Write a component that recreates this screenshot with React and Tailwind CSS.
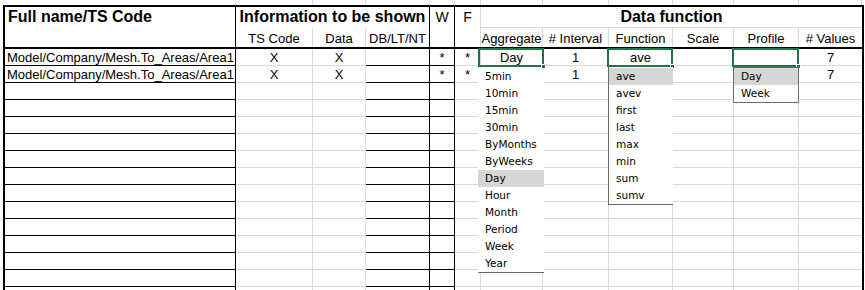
import React from "react";

// sheet column layout (A..L), widths include the 1px right border
const cols = [
  { border: "border-r border-black" },
  { border: "border-r border-[#dadada]" },
  { border: "border-r border-[#dadada]" },
  { border: "border-r border-black" },
  { border: "border-r border-black" },
  { border: "border-r border-[#dadada]" },
  { border: "border-r border-[#dadada]" },
  { border: "border-r border-[#dadada]" },
  { border: "border-r border-[#dadada]" },
  { border: "border-r border-[#dadada]" },
  { border: "border-r border-[#dadada]" },
  { border: "" },
];

const rows = [
  ["Model/Company/Mesh.To_Areas/Area1", "X", "X", "", "*", "*", "Day", "1", "ave", "", "", "7"],
  ["Model/Company/Mesh.To_Areas/Area1", "X", "X", "", "*", "*", "", "1", "", "", "", "7"],
  ...Array.from({ length: 13 }, () => Array(12).fill("")),
];

const aggregateOptions = ["5min", "10min", "15min", "30min", "ByMonths", "ByWeeks", "Day", "Hour", "Month", "Period", "Week", "Year"];
const functionOptions = ["ave", "avev", "first", "last", "max", "min", "sum", "sumv"];
const profileOptions = ["Day", "Week"];

const Option = ({ label, active }) => (
  <div
    className={`h-[17px] leading-[17px] pl-[7px] text-[10.5px] font-['DejaVu_Sans',sans-serif] text-black whitespace-nowrap ${
      active ? "bg-[#d6d6d6]" : ""
    }`}
  >
    {label}
  </div>
);

const Selected = ({ className }) => (
  <div className={`absolute h-[19px] border-2 border-[#217346] pointer-events-none ${className}`}>
    <div className="absolute -right-[4px] -bottom-[4px] w-[5px] h-[5px] bg-[#217346] border border-white" />
  </div>
);

export default function App() {
  return (
    <div className="relative w-[865px] h-[290px] overflow-hidden bg-white text-black font-['Liberation_Sans',Arial,sans-serif]">
      {/* strip of the row above the table */}
      <div className="ml-[5px] h-[5px] grid grid-cols-[231px_77px_53px_64px_25px_26px_62px_66px_64px_61px_65px_63px]">
        {cols.map((c, i) => (
          <div key={i} className="border-r border-[#dadada]" />
        ))}
      </div>

      <div className="ml-[3px] w-[861px] border-x-2 border-t-2 border-black">
        {/* header */}
        <div className="grid grid-cols-[231px_77px_53px_64px_25px_26px_62px_66px_64px_61px_65px_63px] grid-rows-[21px_19px] border-b-2 border-black">
          <div className="row-span-2 border-r border-black pl-[3px] text-[16px] font-bold leading-[20px]">
            Full name/TS Code
          </div>
          <div className="col-span-3 border-r border-black text-center text-[16px] font-bold leading-[20px]">
            Information to be shown
          </div>
          <div className="row-span-2 border-r border-black text-center text-[14px] leading-[20px]">W</div>
          <div className="row-span-2 border-r border-[#dadada] text-center text-[14px] leading-[20px]">F</div>
          <div className="col-span-6 border-b border-[#dadada] text-center text-[16px] font-bold leading-[20px]">
            Data function
          </div>
          {["TS Code", "Data", "DB/LT/NT"].map((t, i) => (
            <div key={t} className={`flex items-end justify-center pb-[1px] text-[13px] leading-[15px] ${cols[i + 1].border}`}>
              {t}
            </div>
          ))}
          {["Aggregate", "# Interval", "Function", "Scale", "Profile", "# Values"].map((t, i) => (
            <div key={t} className={`flex items-end justify-center pb-[1px] text-[13px] leading-[15px] ${cols[i + 6].border}`}>
              {t}
            </div>
          ))}
        </div>

        {/* body */}
        {rows.map((r, ri) => (
          <div key={ri} className="grid grid-cols-[231px_77px_53px_64px_25px_26px_62px_66px_64px_61px_65px_63px] h-[17px]">
            {r.map((v, ci) => (
              <div
                key={ci}
                className={`border-b border-[#dadada] text-[13px] leading-[17px] whitespace-nowrap overflow-hidden ${cols[ci].border} ${
                  ci === 0 ? "pl-[2px]" : "text-center"
                }`}
              >
                {v}
              </div>
            ))}
          </div>
        ))}
      </div>

      {/* active cells */}
      <Selected className="left-[478px] top-[48px] w-[66px]" />
      <Selected className="left-[607px] top-[48px] w-[66px]" />
      <Selected className="left-[732px] top-[48px] w-[67px]" />

      {/* open dropdown lists */}
      <div className="absolute left-[478px] top-[68px] w-[66px] bg-white border-b border-[#6b6b6b]">
        {aggregateOptions.map((o) => (
          <Option key={o} label={o} active={o === "Day"} />
        ))}
      </div>
      <div className="absolute left-[608px] top-[67px] w-[65px] bg-white border-l border-b border-[#6b6b6b] pt-[1px]">
        {functionOptions.map((o) => (
          <Option key={o} label={o} active={o === "ave"} />
        ))}
      </div>
      <div className="absolute left-[733px] top-[67px] w-[66px] bg-white border border-[#6b6b6b]">
        {profileOptions.map((o) => (
          <Option key={o} label={o} active={o === "Day"} />
        ))}
      </div>
    </div>
  );
}
